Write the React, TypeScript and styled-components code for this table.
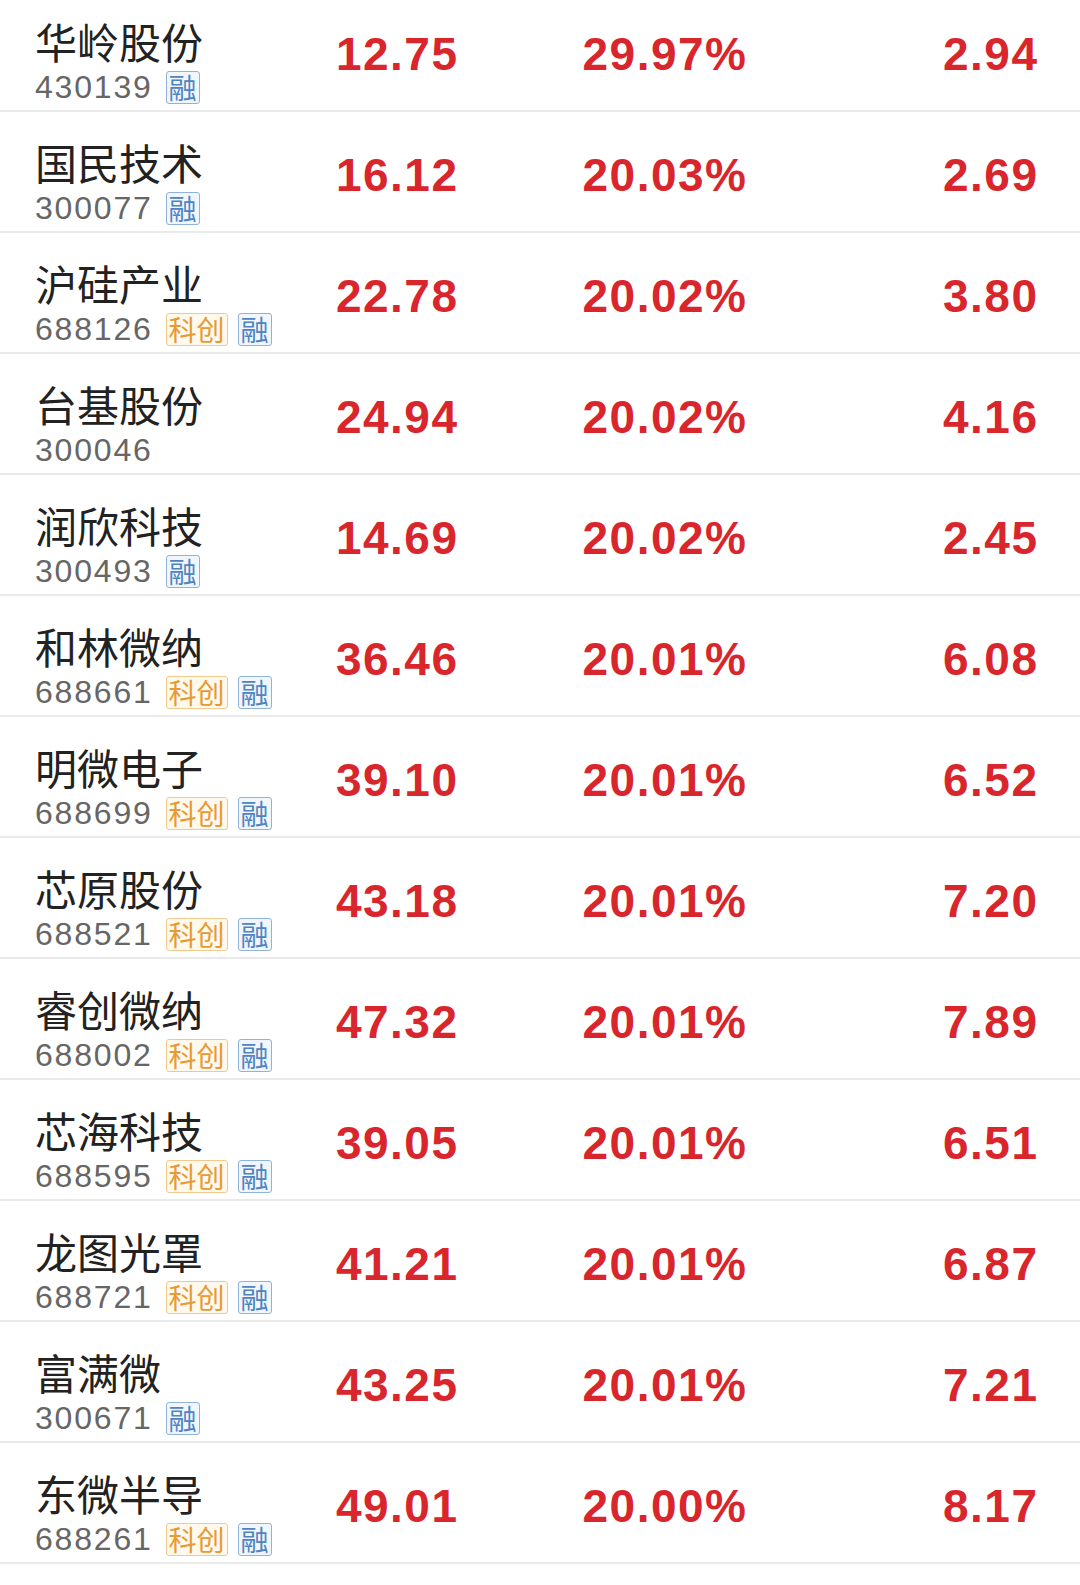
import styled, { createGlobalStyle } from "styled-components";

interface Stock {
    name: string;
    code: string;
    star: boolean;
    margin: boolean;
    price: string;
    change: string;
    ratio: string;
}

const stocks: Stock[] = [
    { name: '华岭股份', code: '430139', star: false, margin: true, price: '12.75', change: '29.97%', ratio: '2.94' },
    { name: '国民技术', code: '300077', star: false, margin: true, price: '16.12', change: '20.03%', ratio: '2.69' },
    { name: '沪硅产业', code: '688126', star: true, margin: true, price: '22.78', change: '20.02%', ratio: '3.80' },
    { name: '台基股份', code: '300046', star: false, margin: false, price: '24.94', change: '20.02%', ratio: '4.16' },
    { name: '润欣科技', code: '300493', star: false, margin: true, price: '14.69', change: '20.02%', ratio: '2.45' },
    { name: '和林微纳', code: '688661', star: true, margin: true, price: '36.46', change: '20.01%', ratio: '6.08' },
    { name: '明微电子', code: '688699', star: true, margin: true, price: '39.10', change: '20.01%', ratio: '6.52' },
    { name: '芯原股份', code: '688521', star: true, margin: true, price: '43.18', change: '20.01%', ratio: '7.20' },
    { name: '睿创微纳', code: '688002', star: true, margin: true, price: '47.32', change: '20.01%', ratio: '7.89' },
    { name: '芯海科技', code: '688595', star: true, margin: true, price: '39.05', change: '20.01%', ratio: '6.51' },
    { name: '龙图光罩', code: '688721', star: true, margin: true, price: '41.21', change: '20.01%', ratio: '6.87' },
    { name: '富满微', code: '300671', star: false, margin: true, price: '43.25', change: '20.01%', ratio: '7.21' },
    { name: '东微半导', code: '688261', star: true, margin: true, price: '49.01', change: '20.00%', ratio: '8.17' },
];

const App: React.FC = () => {
    return (
        <>
            <GlobalStyle />
            <List>
                {stocks.map(stock => (
                    <Row key={stock.code}>
                        <NameCell>
                            <Name>{stock.name}</Name>
                            <CodeLine>
                                <Code>{stock.code}</Code>
                                {stock.star && <Tag kind="star">科创</Tag>}
                                {stock.margin && <Tag kind="margin">融</Tag>}
                            </CodeLine>
                        </NameCell>
                        <Value>{stock.price}</Value>
                        <Value>{stock.change}</Value>
                        <Value>{stock.ratio}</Value>
                    </Row>
                ))}
            </List>
        </>
    );
};

const GlobalStyle = createGlobalStyle`
  body {
    margin: 0;
    background: #ffffff;
    font-family: "Liberation Sans", "Noto Sans CJK SC", sans-serif;
  }
`;

const List = styled.div`
  margin-top: -9px;
  width: 1080px;
  padding-bottom: 22px;
`;

const Row = styled.div`
  display: grid;
  grid-template-columns: 265px 157px 289px 291px;
  height: 119px;
  padding: 0 43px 0 35px;
  border-bottom: 2px solid #eaeaea;
`;

const NameCell = styled.div`
  display: flex;
  flex-direction: column;
  padding-top: 26px;
`;

const Name = styled.div`
  font-family: "Noto Sans CJK SC", sans-serif;
  font-size: 42px;
  line-height: 48px;
  color: #222222;
  white-space: nowrap;
`;

const CodeLine = styled.div`
  display: flex;
  align-items: center;
  margin-top: 4px;
  height: 36px;
`;

const Code = styled.span`
  font-family: "Liberation Sans", sans-serif;
  font-size: 32px;
  letter-spacing: 1.8px;
  color: #666666;
  margin-right: 13px;
`;

const Tag = styled.span<{ kind: 'star' | 'margin' }>`
  display: inline-flex;
  align-items: center;
  justify-content: center;
  box-sizing: border-box;
  height: 33px;
  padding: 0 2px;
  margin-right: 10px;
  border-radius: 3px;
  font-family: "Noto Sans CJK SC", sans-serif;
  font-size: 28px;
  line-height: 1;
  border: 1.5px solid ${p => p.kind === 'star' ? '#f2c98c' : '#8fb3d9'};
  background: ${p => p.kind === 'star' ? '#fff9ec' : '#f0f6fc'};
  color: ${p => p.kind === 'star' ? '#e69a35' : '#4f84c2'};
`;

const Value = styled.div`
  justify-self: end;
  margin-top: 37px;
  margin-right: -1.5px;
  font-family: "Liberation Sans", sans-serif;
  font-weight: bold;
  font-size: 46px;
  line-height: 52px;
  letter-spacing: 1.5px;
  color: #d9262c;
`;

export default App;
